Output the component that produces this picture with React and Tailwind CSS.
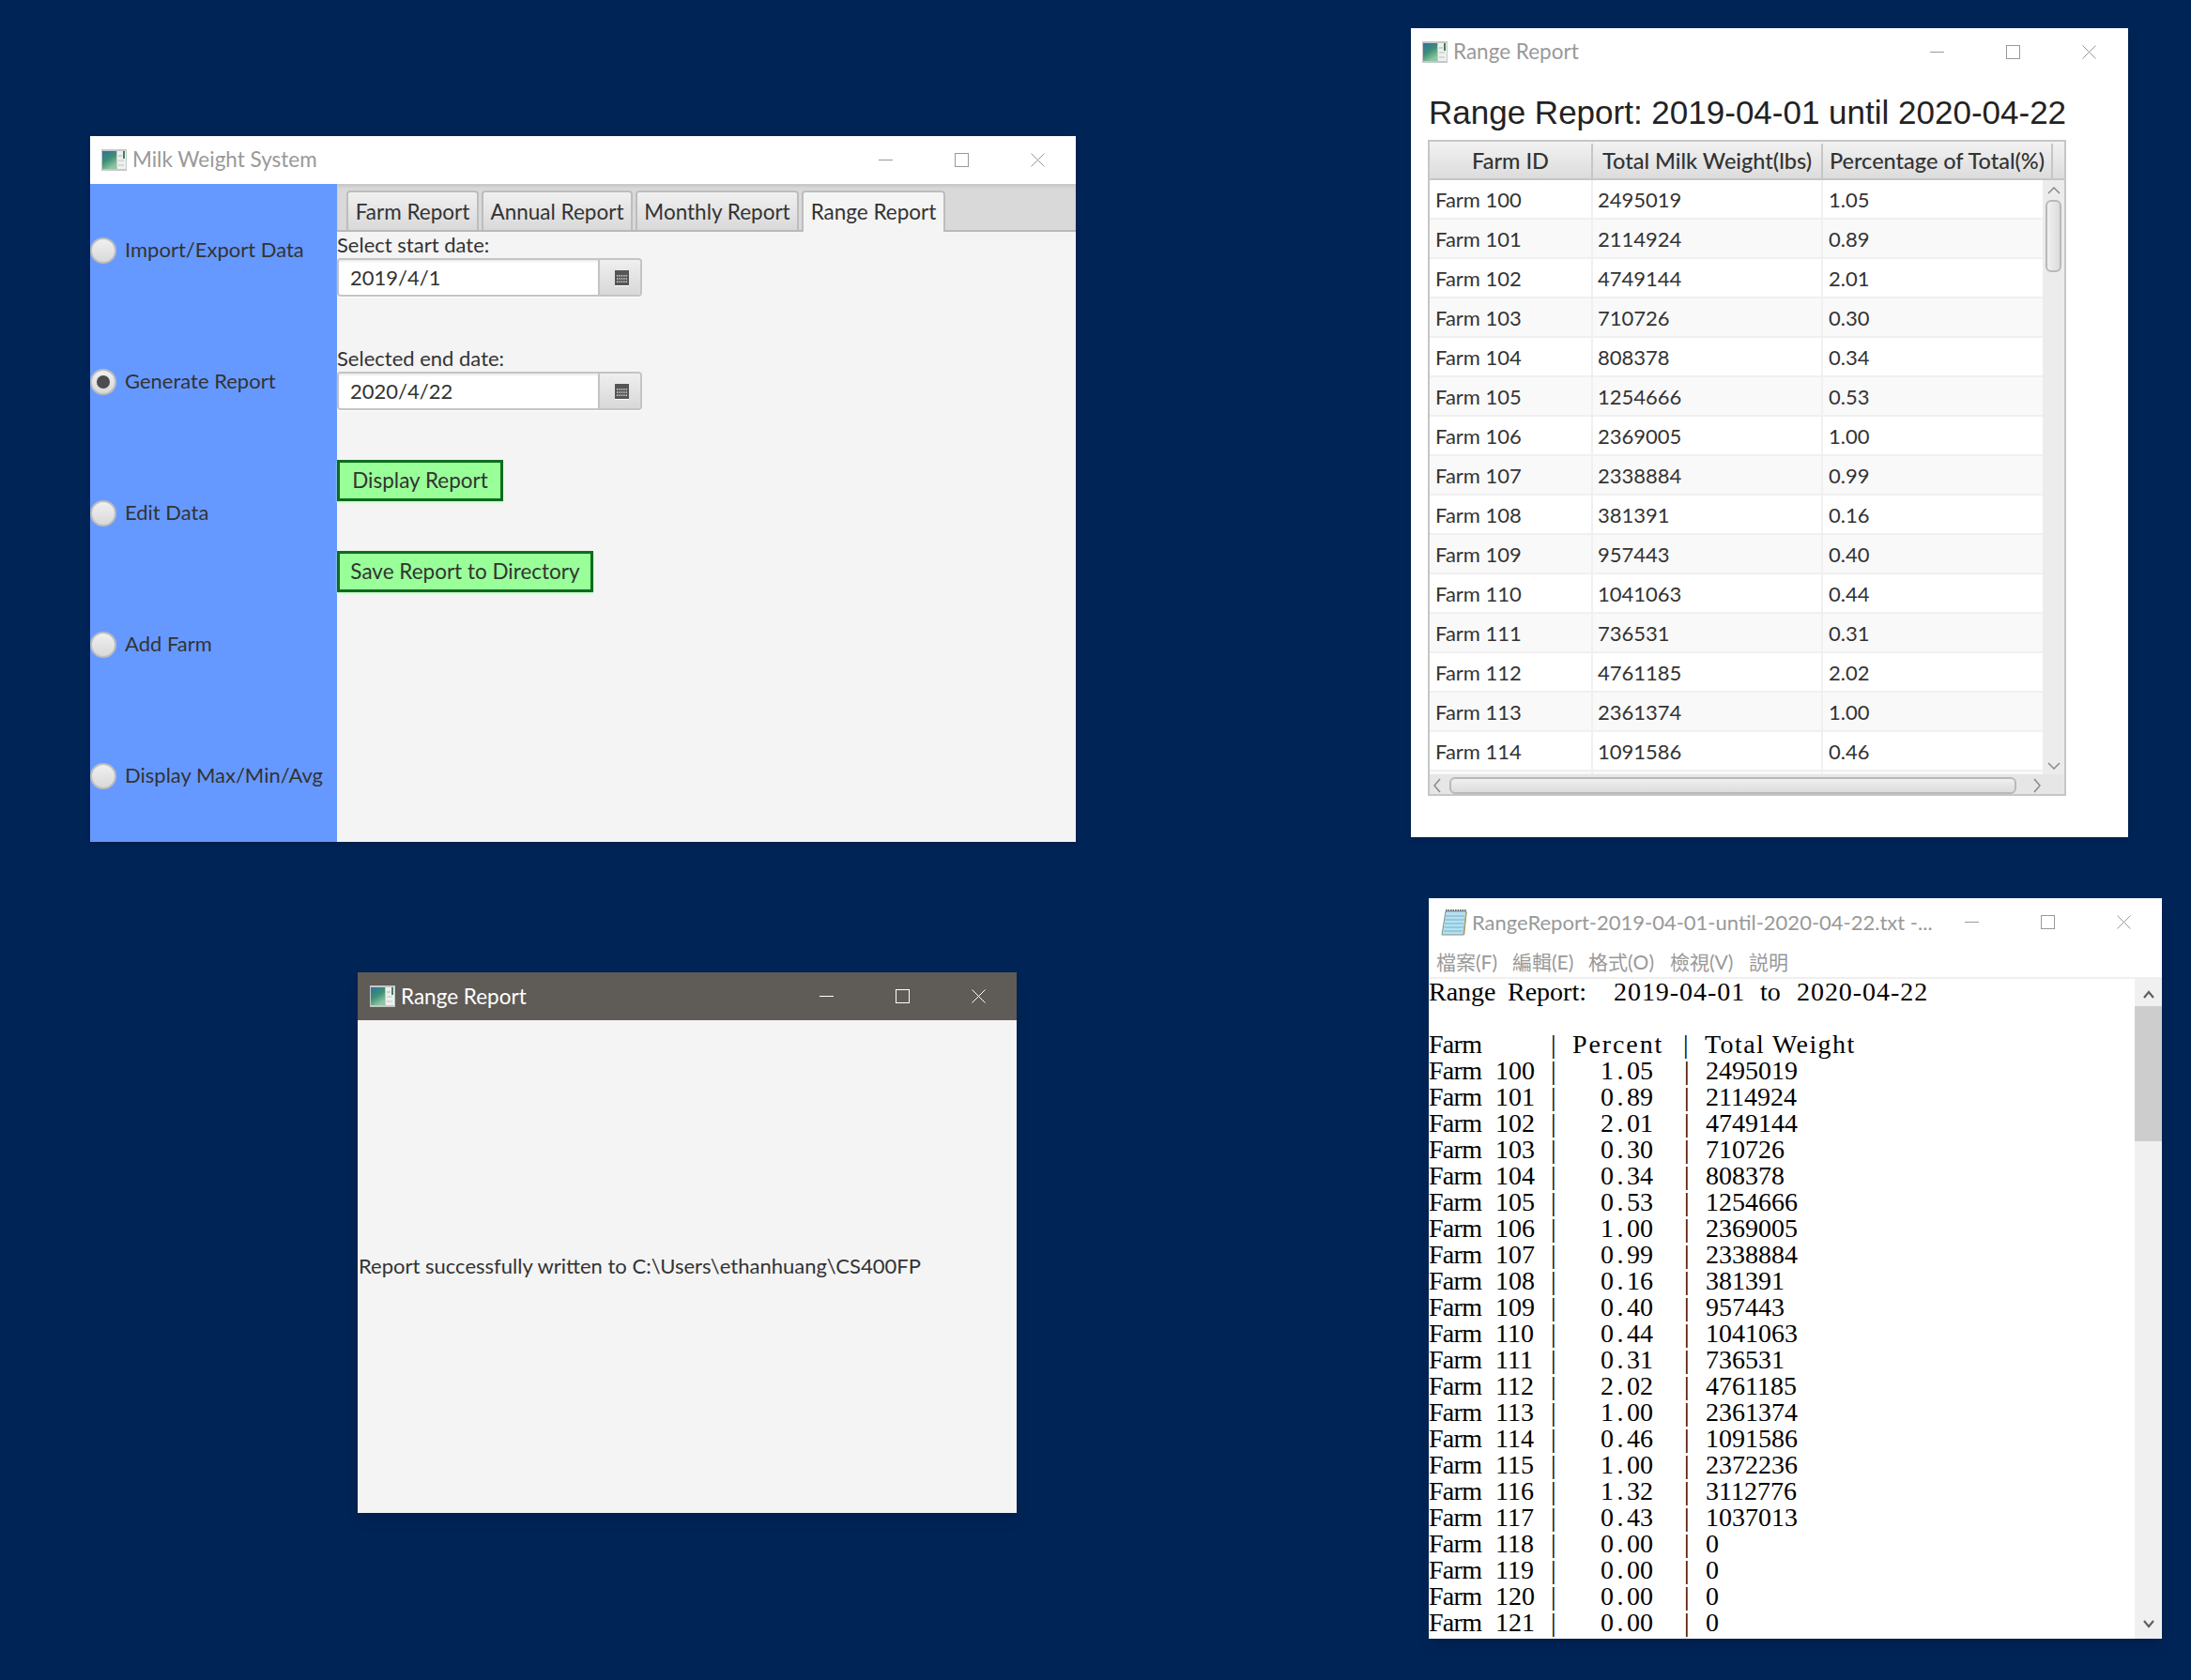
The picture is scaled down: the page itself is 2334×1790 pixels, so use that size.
const TABLE_ROWS = [
  ["Farm 100", "2495019", "1.05"],
  ["Farm 101", "2114924", "0.89"],
  ["Farm 102", "4749144", "2.01"],
  ["Farm 103", "710726", "0.30"],
  ["Farm 104", "808378", "0.34"],
  ["Farm 105", "1254666", "0.53"],
  ["Farm 106", "2369005", "1.00"],
  ["Farm 107", "2338884", "0.99"],
  ["Farm 108", "381391", "0.16"],
  ["Farm 109", "957443", "0.40"],
  ["Farm 110", "1041063", "0.44"],
  ["Farm 111", "736531", "0.31"],
  ["Farm 112", "4761185", "2.02"],
  ["Farm 113", "2361374", "1.00"],
  ["Farm 114", "1091586", "0.46"],
  ["", "", ""],
];

const TEXT_ROWS = [
  ...TABLE_ROWS.slice(0, 15),
  ["Farm 115", "2372236", "1.00"],
  ["Farm 116", "3112776", "1.32"],
  ["Farm 117", "1037013", "0.43"],
  ["Farm 118", "0", "0.00"],
  ["Farm 119", "0", "0.00"],
  ["Farm 120", "0", "0.00"],
  ["Farm 121", "0", "0.00"],
  ["Farm 122", "0", "0.00"],
];

const RADIOS = [
  ["Import/Export Data", false],
  ["Generate Report", true],
  ["Edit Data", false],
  ["Add Farm", false],
  ["Display Max/Min/Avg", false],
];

const TABS = [
  ["Farm Report", "w-[141px]"],
  ["Annual Report", "w-[161px]"],
  ["Monthly Report", "w-[174px]"],
];

function JavaIcon() {
  return (
    <svg width="27" height="23" viewBox="0 0 27 23" className="shrink-0">
      <defs>
        <linearGradient id="javaIconFill" x1="0" y1="0" x2="0.5" y2="1">
          <stop offset="0" stopColor="#2f6f9f" />
          <stop offset="0.55" stopColor="#3f8f76" />
          <stop offset="1" stopColor="#8cc6a0" />
        </linearGradient>
      </defs>
      <rect width="27" height="23" fill="#c4c8c8" />
      <rect x="1" y="2" width="15" height="19" fill="url(#javaIconFill)" />
      <rect x="17" y="2" width="9" height="19" fill="#eef0ee" />
      <rect x="23" y="2" width="2" height="8" fill="#3f7f62" />
      <rect x="18" y="6" width="4" height="2" fill="#c8d0cc" />
      <rect x="18" y="11" width="6" height="2" fill="#d4dad6" />
      <rect x="18" y="16" width="6" height="2" fill="#d4dad6" />
    </svg>
  );
}

function NotepadIcon() {
  return (
    <svg width="28" height="28" viewBox="0 0 28 28" className="shrink-0">
      <path d="M5 2 L27 2 L24 27 L1 27 Z" fill="#b7e0ee" stroke="#7f8f8f" strokeWidth="1" />
      <path d="M5 7 H25 M4.5 11 H24.5 M4 15 H24 M3.5 19 H23.5 M3 23 H23" stroke="#6fb4cf" strokeWidth="1" />
      <path d="M5 1 H27" stroke="#5a6a70" strokeWidth="2" strokeDasharray="1.5 1" />
      <path d="M27 3 L24.5 27" stroke="#b89f6a" strokeWidth="1.5" fill="none" />
    </svg>
  );
}

function WindowButtons({ color }) {
  return (
    <div className="flex h-full shrink-0">
      <div className="flex h-full w-[81px] items-center justify-center">
        <svg width="15" height="15" viewBox="0 0 15 15">
          <path d="M0 7.5 H15" stroke={color} strokeWidth="1" />
        </svg>
      </div>
      <div className="flex h-full w-[81px] items-center justify-center">
        <svg width="15" height="15" viewBox="0 0 15 15">
          <rect x="0.5" y="0.5" width="14" height="14" fill="none" stroke={color} strokeWidth="1" />
        </svg>
      </div>
      <div className="flex h-full w-[81px] items-center justify-center">
        <svg width="15" height="15" viewBox="0 0 15 15">
          <path d="M0.5 0.5 L14.5 14.5 M14.5 0.5 L0.5 14.5" stroke={color} strokeWidth="1" />
        </svg>
      </div>
    </div>
  );
}

function TitleBar({ title }) {
  return (
    <div className="flex h-[51px] shrink-0 items-center justify-between bg-white pl-[12px] text-[22.5px] text-[#999999]">
      <div className="flex items-center gap-[6px]">
        <JavaIcon />
        <span className="mb-[1px]">{title}</span>
      </div>
      <WindowButtons color="#999999" />
    </div>
  );
}

function Radio({ label, checked }) {
  return (
    <div className="flex h-[140px] items-center gap-[9px]">
      <div className="flex h-[28px] w-[28px] items-center justify-center rounded-full border-2 border-[#bcbcbc] bg-linear-to-b from-[#f0f0f0] to-[#d9d9d9]">
        {checked && <div className="h-[14px] w-[14px] rounded-full bg-[#4d4d4d]" />}
      </div>
      <span className="mb-[3px] text-[22px] text-[#333333]">{label}</span>
    </div>
  );
}

const CAL_DOTS = [0, 1, 2, 3, 4].flatMap((c) => [0, 1, 2].map((r) => [2 + c * 2.4, 5 + r * 3.2]));

function CalendarIcon() {
  return (
    <svg width="15" height="17" viewBox="0 0 15 17" className="ml-[3px] mt-[2px]">
      <rect width="15" height="16" fill="#555555" />
      <rect y="16" width="15" height="1" fill="#ffffff" />
      {CAL_DOTS.map(([x, y]) => (
        <rect key={`${x}-${y}`} x={x} y={y} width="1.4" height="1.6" fill="#d0d0d0" />
      ))}
    </svg>
  );
}

function DateField({ value }) {
  return (
    <div className="flex h-[41px] w-[325px] rounded-[4px] border-2 border-[#c4c4c4] shadow-[0_1px_1px_#ffffff]">
      <div className="flex w-[276px] items-center rounded-l-[3px] bg-white pl-[12px] text-[22px] text-[#333333] shadow-[inset_0_2px_2px_#eeeeee]">
        {value}
      </div>
      <div className="flex flex-1 items-center justify-center rounded-r-[3px] border-l-2 border-[#c4c4c4] bg-linear-to-b from-[#efefef] to-[#d8d8d8]">
        <CalendarIcon />
      </div>
    </div>
  );
}

function GreenButton({ children, className }) {
  return (
    <div className={`flex h-[44px] items-center justify-center border-[3px] border-[#0f6b1f] bg-[#99ff99] text-[22.5px] text-[#333333] shadow-[0_1px_2px_#aaffaa] ${className}`}>
      {children}
    </div>
  );
}

function MilkWindow() {
  return (
    <div className="absolute left-[96px] top-[145px] flex h-[751px] w-[1050px] flex-col shadow-md">
      <TitleBar title="Milk Weight System" />
      <div className="flex flex-1">
        <div className="flex w-[263px] flex-col bg-[#6699ff] pt-[1px]">
          {RADIOS.map(([label, checked]) => (
            <Radio key={label} label={label} checked={checked} />
          ))}
        </div>
        <div className="flex flex-1 flex-col bg-[#f4f4f4]">
          <div className="flex h-[51px] items-end gap-[3px] border-b-2 border-[#b8b8b8] bg-[#d9d9d9] pl-[10px] shadow-[inset_0_3px_3px_#c8c8c8]">
            {TABS.map(([label, width]) => (
              <div key={label} className={`flex h-[42px] items-center justify-center rounded-t-[4px] border-2 border-b-0 border-[#bdbdbd] bg-linear-to-b from-[#f0f0f0] to-[#d9d9d9] pt-[1px] text-[22.5px] text-[#333333] ${width}`}>
                {label}
              </div>
            ))}
            <div className="-mb-[2px] flex h-[44px] w-[153px] items-center justify-center rounded-t-[4px] border-2 border-b-0 border-[#bdbdbd] bg-[#f4f4f4] pb-[1px] text-[22.5px] text-[#333333]">
              Range Report
            </div>
          </div>
          <div className="flex flex-col items-start">
            <div className="flex h-[28px] items-center pb-[1px] text-[22px] text-[#333333]">Select start date:</div>
            <DateField value="2019/4/1" />
            <div className="mt-[52px] flex h-[28px] items-center pb-[1px] text-[22px] text-[#333333]">Selected end date:</div>
            <DateField value="2020/4/22" />
            <GreenButton className="mt-[53px] w-[177px]">Display Report</GreenButton>
            <GreenButton className="mt-[53px] w-[273px]">Save Report to Directory</GreenButton>
          </div>
        </div>
      </div>
    </div>
  );
}

function TableWindow() {
  return (
    <div className="absolute left-[1503px] top-[30px] flex h-[862px] w-[764px] flex-col bg-white shadow-md">
      <div className="flex h-[51px] shrink-0 items-center justify-between pl-[12px] pr-[1px] text-[22.5px] text-[#999999]">
        <div className="flex items-center gap-[6px]">
          <JavaIcon />
          <span className="mb-[1px]">Range Report</span>
        </div>
        <WindowButtons color="#999999" />
      </div>
      <div className="flex h-[68px] shrink-0 items-center pl-[19px] pt-[9px] font-['Liberation_Sans',sans-serif] text-[35px] leading-none whitespace-nowrap text-[#222222]">
        Range Report: 2019-04-01 until 2020-04-22
      </div>
      <div className="ml-[18px] flex h-[699px] w-[680px] flex-col border-2 border-[#c6c6c6] bg-white text-[22px] text-[#333333]">
        <div className="flex h-[41px] shrink-0 border-b-2 border-[#c6c6c6] bg-linear-to-b from-[#f2f2f2] to-[#dcdcdc] pt-[2px] text-[23.5px] font-medium whitespace-nowrap">
          <div className="flex w-[174px] items-center justify-center border-r-2 border-[#c6c6c6]">Farm ID</div>
          <div className="flex w-[245px] items-center justify-center border-r-2 border-[#c6c6c6]">Total Milk Weight(lbs)</div>
          <div className="flex w-[245px] items-center justify-center border-r-2 border-[#c6c6c6]">Percentage of Total(%)</div>
          <div className="flex-1" />
        </div>
        <div className="flex h-[633px] shrink-0">
          <div className="flex-1 overflow-hidden">
            {TABLE_ROWS.map(([farm, weight, pct], i) => (
              <div key={i} className={`flex h-[42px] border-b-2 border-[#f0f0f0] ${i % 2 === 0 ? "bg-white" : "bg-[#f9f9f9]"}`}>
                <div className="flex w-[174px] items-center border-r-2 border-[#f0f0f0] pl-[6px]">{farm}</div>
                <div className="flex w-[245px] items-center border-r-2 border-[#f0f0f0] pl-[5px]">{weight}</div>
                <div className="flex flex-1 items-center pl-[6px]">{pct}</div>
              </div>
            ))}
          </div>
          <div className="flex w-[23px] flex-col items-center bg-[#ececec]">
            <svg width="14" height="8" viewBox="0 0 14 8" className="mt-[7px]">
              <path d="M1 7 L7 1 L13 7" fill="none" stroke="#8a8a8a" strokeWidth="1.5" />
            </svg>
            <div className="mt-[6px] h-[77px] w-[17px] rounded-[6px] border-2 border-[#b9b9b9] bg-linear-to-r from-[#f0f0f0] to-[#dcdcdc]" />
            <div className="flex-1" />
            <svg width="14" height="8" viewBox="0 0 14 8" className="mb-[5px]">
              <path d="M1 1 L7 7 L13 1" fill="none" stroke="#8a8a8a" strokeWidth="1.5" />
            </svg>
          </div>
        </div>
        <div className="flex h-[21px] shrink-0 items-center bg-[#e6e6e6] pt-[3px]">
          <svg width="8" height="16" viewBox="0 0 8 16" className="ml-[4px]">
            <path d="M7 1 L1 8 L7 15" fill="none" stroke="#8a8a8a" strokeWidth="1.5" />
          </svg>
          <div className="ml-[9px] h-[18px] w-[604px] rounded-[6px] border-2 border-[#b9b9b9] bg-linear-to-b from-[#f0f0f0] to-[#dcdcdc]" />
          <svg width="8" height="16" viewBox="0 0 8 16" className="ml-[18px]">
            <path d="M1 1 L7 8 L1 15" fill="none" stroke="#8a8a8a" strokeWidth="1.5" />
          </svg>
        </div>
      </div>
    </div>
  );
}

function MessageWindow() {
  return (
    <div className="absolute left-[381px] top-[1036px] flex h-[576px] w-[702px] flex-col shadow-lg">
      <div className="flex h-[51px] shrink-0 items-center justify-between bg-[#5f5b56] pl-[13px] text-[22.5px] text-white">
        <div className="flex items-center gap-[6px]">
          <JavaIcon />
          <span>Range Report</span>
        </div>
        <WindowButtons color="#ffffff" />
      </div>
      <div className="flex flex-1 items-center bg-[#f4f4f4] pb-[3px] pl-[1px] text-[22px] text-[#333333]">
        Report successfully written to C:\Users\ethanhuang\CS400FP
      </div>
    </div>
  );
}

function Dotted({ value }) {
  const [whole, frac] = value.split(".");
  return (
    <span>
      {whole}
      <span className="px-[3.5px]">.</span>
      {frac}
    </span>
  );
}

function FarmName({ name }) {
  const [word, num] = name.split(" ");
  return (
    <span className="w-[130px]">
      <span className="inline-block w-[71px] tracking-[-0.7px]">{word}</span>
      {num}
    </span>
  );
}

function NotepadWindow() {
  return (
    <div className="absolute left-[1522px] top-[957px] flex h-[789px] w-[781px] flex-col bg-white shadow-lg">
      <div className="flex h-[51px] shrink-0 items-center justify-between pl-[13px] text-[22px] text-[#999999]">
        <div className="flex items-center gap-[5px] whitespace-nowrap">
          <NotepadIcon />
          <span>RangeReport-2019-04-01-until-2020-04-22.txt -...</span>
        </div>
        <WindowButtons color="#999999" />
      </div>
      <div className="flex h-[33px] shrink-0 items-center pl-[8px] font-['Lato','Noto_Sans_CJK_TC',sans-serif] text-[21px] text-[#999999]">
        <span className="w-[81px]">檔案(F)</span>
        <span className="w-[81px]">編輯(E)</span>
        <span className="w-[87px]">格式(O)</span>
        <span className="w-[84px]">檢視(V)</span>
        <span>説明</span>
      </div>
      <div className="h-[2px] shrink-0 bg-[#f0f0f0]" />
      <div className="flex min-h-0 flex-1">
        <div className="-mt-[3px] flex-1 overflow-hidden pt-[3px] font-['Liberation_Serif','Noto_Sans_CJK_TC',serif] text-[28px] leading-[28px] text-black">
          <div className="flex h-[28px] whitespace-nowrap">
            <span className="w-[84px]">Range</span>
            <span className="w-[113px]">Report:</span>
            <span className="w-[156px] tracking-[0.95px]">2019-04-01</span>
            <span className="w-[39px]">to</span>
            <span className="tracking-[0.95px]">2020-04-22</span>
          </div>
          <div className="h-[28px]" />
          <div className="flex h-[28px] whitespace-nowrap">
            <span className="w-[130px] tracking-[-0.7px]">Farm</span>
            <span className="w-[23px]">|</span>
            <span className="w-[118px] tracking-[1.9px]">Percent</span>
            <span className="w-[23px]">|</span>
            <span className="tracking-[1.4px]">Total Weight</span>
          </div>
          {TEXT_ROWS.map(([farm, weight, pct]) => (
            <div key={farm} className="flex h-[28px] whitespace-nowrap">
              <FarmName name={farm} />
              <span className="w-[53px]">|</span>
              <span className="w-[89px]"><Dotted value={pct} /></span>
              <span className="w-[23px]">|</span>
              <span>{weight}</span>
            </div>
          ))}
        </div>
        <div className="flex w-[29px] shrink-0 flex-col items-center bg-[#f0f0f0]">
          <svg width="12" height="9" viewBox="0 0 12 9" className="mt-[12px]">
            <path d="M1 8 L6 2 L11 8" fill="none" stroke="#606060" strokeWidth="2.2" />
          </svg>
          <div className="mt-[8px] h-[144px] w-full bg-[#cdcdcd]" />
          <div className="flex-1" />
          <svg width="12" height="9" viewBox="0 0 12 9" className="mb-[11px]">
            <path d="M1 1 L6 7 L11 1" fill="none" stroke="#606060" strokeWidth="2.2" />
          </svg>
        </div>
      </div>
    </div>
  );
}

export default function App() {
  return (
    <div className="relative h-[1790px] w-[2334px] overflow-hidden bg-[#012456] font-['Lato',sans-serif]">
      <MilkWindow />
      <TableWindow />
      <MessageWindow />
      <NotepadWindow />
    </div>
  );
}
